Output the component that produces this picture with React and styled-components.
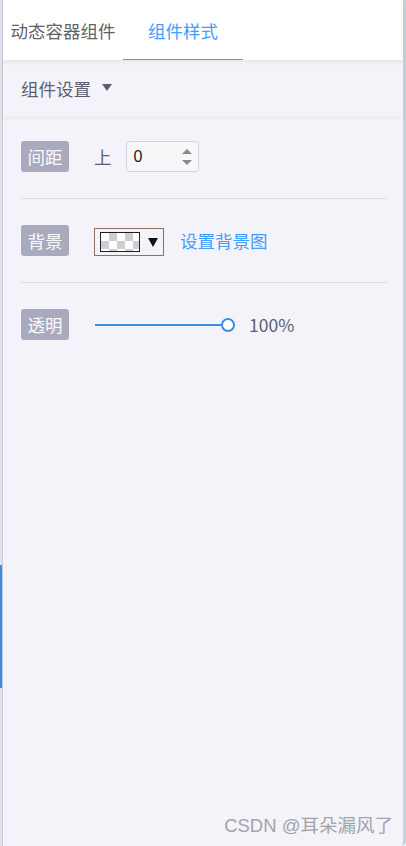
import React, { useState } from "react";
import styled, { createGlobalStyle } from "styled-components";

const GlobalStyle = createGlobalStyle`
  html, body {
    margin: 0;
    padding: 0;
    height: 846px;
    overflow: hidden;
    background: #f3f3f9;
    font-family: "Microsoft YaHei", "Noto Sans CJK SC", "Liberation Sans", sans-serif;
  }
  #root {
    height: 100%;
  }
`;

const Page = styled.div`
  display: flex;
  height: 846px;
  position: relative;
`;

const SideStrip = styled.div`
  width: 2px;
  flex-shrink: 0;
  background: #e3e3eb;
  border-right: 1px solid #cbcbd7;
  display: flex;
  flex-direction: column;
`;

const ScrollMark = styled.div`
  margin-top: 565px;
  height: 123px;
  width: 2px;
  background: #3a8ee6;
`;

const Panel = styled.div`
  flex: 1;
  display: flex;
  flex-direction: column;
  background: #f3f3f9;
  border-right: 3px solid #bcd6da;
  border-bottom-right-radius: 5px;
`;

const TabBar = styled.div`
  height: 60px;
  display: flex;
  background: #fff;
  box-shadow: 0 2px 5px rgba(60, 60, 90, 0.08);
  position: relative;
  z-index: 2;
`;

const Tab = styled.div`
  width: 120px;
  display: flex;
  align-items: center;
  justify-content: center;
  box-sizing: border-box;
  font-size: 17.5px;
  color: ${(p) => (p.$active ? "#409eff" : "#606266")};
  border-bottom: 1px solid ${(p) => (p.$active ? "#409eff" : "transparent")};
  padding-top: 2px;
  cursor: pointer;
`;

const SectionHead = styled.div`
  height: 56px;
  display: flex;
  align-items: center;
  gap: 11px;
  padding-left: 18px;
  font-size: 17.5px;
  color: #5b5f70;
  box-shadow: 0 2px 4px rgba(60, 60, 90, 0.06);
  position: relative;
  z-index: 1;
`;

const Caret = styled.span`
  width: 0;
  height: 0;
  border-left: 5px solid transparent;
  border-right: 5px solid transparent;
  border-top: 7px solid #5b5f70;
  margin-top: -2px;
`;

const Body = styled.div`
  padding: 25px 16px 0 18px;
  display: flex;
  flex-direction: column;
`;

const Row = styled.div`
  display: flex;
  align-items: center;
  height: 31px;
  padding-bottom: ${(p) => (p.$last ? "0" : "26px")};
  margin-bottom: ${(p) => (p.$last ? "0" : "26px")};
  border-bottom: ${(p) => (p.$last ? "none" : "1px solid #dcdce8")};
`;

const Badge = styled.span`
  height: 31px;
  width: 48px;
  box-sizing: border-box;
  display: inline-flex;
  align-items: center;
  justify-content: center;
  border-radius: 3px;
  background: #a9aabd;
  color: #fafafa;
  font-size: 17.5px;
  margin-right: 25px;
  flex-shrink: 0;
`;

const Text = styled.span`
  font-size: 17.5px;
  color: ${(p) => p.$color || "#5b5f70"};
  margin-right: ${(p) => p.$mr || 0}px;
  cursor: ${(p) => (p.$link ? "pointer" : "default")};
`;

const NumberBox = styled.div`
  width: 73px;
  height: 31px;
  box-sizing: border-box;
  border: 1px solid #cfd5de;
  border-radius: 3px;
  background: #f6f7f9;
  display: flex;
  align-items: center;
  padding-left: 7px;
  font-family: "Liberation Sans", Arial, sans-serif;
  font-size: 16px;
  color: #222;
`;

const NumberValue = styled.span`
  flex: 1;
`;

const Spin = styled.div`
  width: 22px;
  display: flex;
  flex-direction: column;
  align-items: center;
  gap: 6px;
`;

const SpinArrow = styled.span`
  width: 0;
  height: 0;
  border-left: 5px solid transparent;
  border-right: 5px solid transparent;
  ${(p) =>
    p.$up ? "border-bottom: 5px solid #8a8a8a;" : "border-top: 5px solid #8a8a8a;"}
`;

const ColorPicker = styled.div`
  width: 70px;
  height: 28px;
  box-sizing: border-box;
  border: 1px solid #8d735f;
  display: flex;
  align-items: center;
  gap: 8px;
  padding-left: 5px;
  margin-right: 16px;
  margin-top: 3px;
`;

const Swatch = styled.div`
  width: 40px;
  height: 20px;
  box-sizing: border-box;
  border: 1.5px solid #222;
  background-color: #fff;
  background-image: linear-gradient(45deg, #cfcfcf 25%, transparent 25%, transparent 75%, #cfcfcf 75%),
    linear-gradient(45deg, #cfcfcf 25%, transparent 25%, transparent 75%, #cfcfcf 75%);
  background-size: 16px 16px;
  background-position: 0 0, 8px 8px;
`;

const DropArrow = styled.span`
  width: 0;
  height: 0;
  border-left: 5px solid transparent;
  border-right: 5px solid transparent;
  border-top: 9px solid #111;
`;

const Slider = styled.div`
  width: 140px;
  height: 16px;
  margin-left: 1px;
  margin-right: 14px;
  position: relative;
  display: flex;
  align-items: center;
`;

const Track = styled.div`
  flex: 1;
  height: 2px;
  background: #3a8ee6;
`;

const Thumb = styled.span`
  position: absolute;
  left: ${(p) => p.$pos}%;
  top: 50%;
  width: 10px;
  height: 10px;
  transform: translate(-100%, -50%);
  border: 2px solid #3a8ee6;
  border-radius: 50%;
  background: #fff;
`;

const Watermark = styled.div`
  position: absolute;
  right: 13px;
  bottom: 9px;
  font-size: 18.5px;
  color: #a3a3a8;
  font-family: "Liberation Sans", "Noto Sans CJK SC", sans-serif;
`;

export default function App() {
  const [tab, setTab] = useState(1);
  return (
    <Page>
      <GlobalStyle />
      <SideStrip>
        <ScrollMark />
      </SideStrip>
      <Panel>
        <TabBar>
          <Tab $active={tab === 0} onClick={() => setTab(0)}>动态容器组件</Tab>
          <Tab $active={tab === 1} onClick={() => setTab(1)}>组件样式</Tab>
        </TabBar>
        <SectionHead>
          组件设置
          <Caret />
        </SectionHead>
        <Body>
          <Row>
            <Badge>间距</Badge>
            <Text $mr={14}>上</Text>
            <NumberBox>
              <NumberValue>0</NumberValue>
              <Spin>
                <SpinArrow $up />
                <SpinArrow />
              </Spin>
            </NumberBox>
          </Row>
          <Row>
            <Badge>背景</Badge>
            <ColorPicker>
              <Swatch />
              <DropArrow />
            </ColorPicker>
            <Text $color="#409eff" $link>设置背景图</Text>
          </Row>
          <Row $last>
            <Badge>透明</Badge>
            <Slider>
              <Track />
              <Thumb $pos={100} />
            </Slider>
            <Text>100%</Text>
          </Row>
        </Body>
      </Panel>
      <Watermark>CSDN @耳朵漏风了</Watermark>
    </Page>
  );
}
